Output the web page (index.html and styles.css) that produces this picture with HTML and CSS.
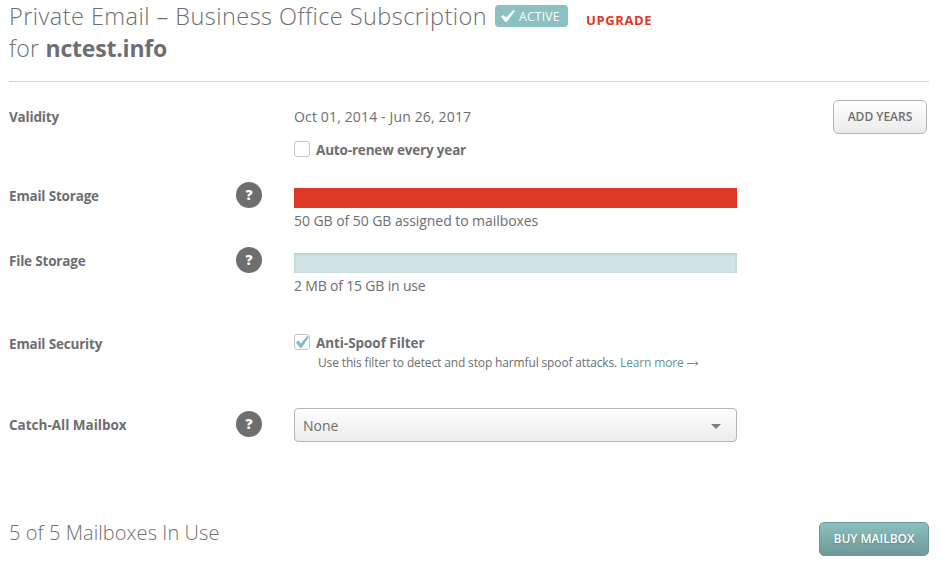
FILE: index.html
```html
<!DOCTYPE html>
<html lang="en">
<head>
<meta charset="UTF-8">
<meta name="viewport" content="width=device-width, initial-scale=1.0">
<title>Private Email Subscription</title>
<link rel="stylesheet" href="styles.css">
</head>
<body>

<div class="container">

<!-- Subscription title and status -->
<div class="header">
<div class="title-line">
<h1>Private Email – Business Office Subscription</h1>
<span class="badge">
<svg width="14" height="12" viewBox="0 0 14 12"><path d="M0 6.8 L2.2 4.9 L5 7.6 L12.3 0 L14 1.1 L5.7 12 L4.6 12 Z" fill="#fff"/></svg>
<span>ACTIVE</span>
</span>
<a href="#" class="upgrade">UPGRADE</a>
</div>
<div class="domain">for <strong>nctest.info</strong></div>
</div>

<!-- Subscription settings -->
<div class="row row-validity">
<div class="label">Validity</div>
<div class="help"></div>
<div class="content">
<div class="dates">Oct 01, 2014 - Jun 26, 2017</div>
<label class="check-line">
<span class="checkbox"></span>
<span>Auto-renew every year</span>
</label>
</div>
<button class="btn add-btn">ADD YEARS</button>
</div>

<div class="row row-storage">
<div class="label">Email Storage</div>
<div class="help"><span class="help-icon">?</span></div>
<div class="content">
<div class="bar bar-full"></div>
<div class="usage">50 GB of 50 GB assigned to mailboxes</div>
</div>
</div>

<div class="row row-files">
<div class="label">File Storage</div>
<div class="help"><span class="help-icon">?</span></div>
<div class="content">
<div class="bar"></div>
<div class="usage">2 MB of 15 GB in use</div>
</div>
</div>

<div class="row row-security">
<div class="label">Email Security</div>
<div class="help"></div>
<div class="content">
<label class="check-line">
<span class="checkbox"><svg width="13" height="12" viewBox="0 0 12 11"><path d="M0 6 L2 4.2 L4.4 6.8 L10.6 0 L12 0.9 L5.1 11 L3.9 11 Z" fill="#7fbcbc"/></svg></span>
<span>Anti-Spoof Filter</span>
</label>
<p class="note">Use this filter to detect and stop harmful spoof attacks. <a href="#">Learn more <svg width="12" height="7" viewBox="0 0 12 7"><path d="M0 3.5 H11 M8.5 1.5 L11 3.5 L8.5 5.5" fill="none" stroke="#5f9494"/></svg></a></p>
</div>
</div>

<div class="row row-catchall">
<div class="label">Catch-All Mailbox</div>
<div class="help"><span class="help-icon">?</span></div>
<div class="content">
<button class="select"><span>None</span><i class="arrow"></i></button>
</div>
</div>

<!-- Mailboxes -->
<div class="mailboxes">
<h2>5 of 5 Mailboxes In Use</h2>
<button class="btn buy-btn">BUY MAILBOX</button>
</div>

</div>

</body>
</html>
```
FILE: styles.css
```css
* {
box-sizing: border-box;
}

body {
font-family: "Open Sans", sans-serif;
font-size: 14px;
margin: 0;
background-color: #fff;
color: #6d6e70;
white-space: nowrap;
}

a {
text-decoration: none;
}

.container {
width: 920px;
margin-left: 9px;
}

.header {
height: 82px;
border-bottom: 1px solid #d1d3d3;
}

.title-line {
display: flex;
height: 33px;
}

h1 {
width: 486px;
margin: 0;
font-size: 23.5px;
font-weight: 350;
line-height: 33px;
letter-spacing: 0.45px;
}

.domain {
font-size: 23px;
font-weight: 350;
line-height: 30px;
letter-spacing: 0.3px;
}

.domain strong {
font-weight: 700;
letter-spacing: -0.2px;
}

.badge {
display: flex;
align-items: center;
width: 73px;
height: 22px;
margin-top: 5px;
padding-left: 6px;
gap: 4px;
border-radius: 4px;
background-color: #8bc1c1;
color: #fff;
font-size: 12px;
letter-spacing: 0.3px;
}

.upgrade {
margin: 10px 0 0 18px;
font-size: 13px;
font-weight: 700;
line-height: 20px;
letter-spacing: 0.6px;
color: #dd3726;
}

.row {
display: grid;
grid-template-columns: 227px 58px 443px 1fr;
align-items: start;
}

.row-validity {
height: 100px;
padding-top: 18px;
}

.row-storage {
height: 65px;
}

.row-files {
height: 79px;
}

.row-security {
height: 82px;
padding-top: 6px;
}

.label {
font-size: 13.5px;
font-weight: 700;
line-height: 20px;
letter-spacing: -0.18px;
padding-top: 4px;
}

.row-validity .label {
padding-top: 7px;
}

.row-security .label {
padding-top: 2px;
}

.row-catchall .label {
padding-top: 7px;
letter-spacing: 0;
}

.help-icon {
display: block;
width: 26px;
height: 26px;
border-radius: 50%;
background-color: #6d6e70;
color: #fff;
font-size: 14px;
font-weight: 800;
line-height: 26px;
text-align: center;
}

.row-catchall .help-icon {
margin-top: 3px;
}

.dates {
height: 41px;
padding-top: 7px;
line-height: 20px;
letter-spacing: 0.15px;
}

.check-line {
display: flex;
align-items: flex-start;
gap: 6px;
height: 20px;
font-size: 13.5px;
font-weight: 700;
line-height: 19px;
letter-spacing: -0.06px;
}

.row-validity .check-line {
letter-spacing: -0.17px;
}

.checkbox {
display: flex;
align-items: center;
justify-content: center;
width: 16px;
height: 16px;
border: 1px solid #c4c5c5;
border-radius: 3px;
background-color: #fff;
}

.bar {
height: 20px;
margin-top: 6px;
background-color: #d0e6e6;
box-shadow: inset 0 1px 3px rgba(60, 110, 100, 0.25);
}

.bar-full {
background-color: #dd3726;
box-shadow: none;
}

.usage {
line-height: 20px;
letter-spacing: -0.06px;
padding-top: 3px;
}

.row-files .usage {
letter-spacing: -0.18px;
}

.row-security .content {
padding-top: 2px;
}

.note {
margin: 0 0 0 24px;
font-size: 12px;
line-height: 18px;
letter-spacing: -0.14px;
}

.note a {
color: #5f9494;
}

.btn {
height: 34px;
border-radius: 5px;
padding: 0 0 2px;
font-family: "Open Sans", sans-serif;
font-size: 12px;
font-weight: 600;
}

.add-btn {
justify-self: end;
width: 94px;
margin-right: 2px;
border: 1px solid #b4b5b5;
background: linear-gradient(#ffffff, #ebebeb);
color: #6d6e70;
}

.select {
display: flex;
align-items: center;
justify-content: space-between;
width: 443px;
height: 34px;
padding: 0 15px 0 8px;
border: 1px solid #b4b5b5;
border-radius: 4px;
background: linear-gradient(#ffffff, #ebebeb);
color: #6d6e70;
font-family: "Open Sans", sans-serif;
font-size: 14px;
}

.arrow {
margin-top: 2px;
border: 5px solid transparent;
border-top-color: #808080;
border-bottom: 0;
}

.mailboxes {
display: flex;
justify-content: space-between;
align-items: flex-start;
margin-top: 80px;
}

h2 {
margin: 0;
font-size: 20px;
font-weight: 350;
line-height: 22px;
letter-spacing: 0.07px;
}

.buy-btn {
width: 110px;
border: 1px solid #6d9896;
background: linear-gradient(#89c0bf, #709998);
color: #fff;
text-shadow: 0 1px 2px rgba(50, 80, 80, 0.4);
}
```
